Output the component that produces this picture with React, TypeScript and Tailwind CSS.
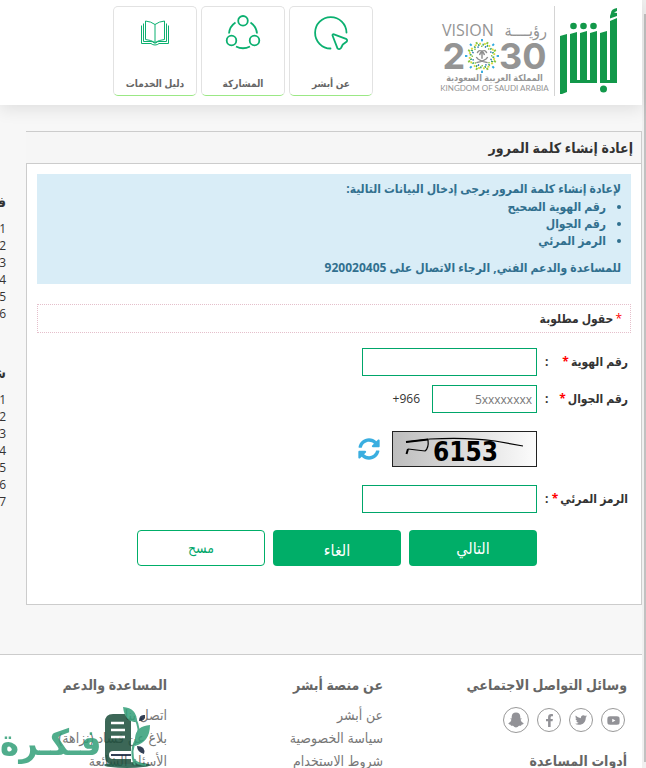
import { FaFacebookF, FaTwitter, FaSnapchatGhost, FaYoutube } from 'react-icons/fa';

const headerCards = [
    { title: 'عن أبشر', icon: <AboutIcon /> },
    { title: 'المشاركة', icon: <ShareIcon /> },
    { title: 'دليل الخدمات', icon: <GuideIcon /> },
];

const requirements = ['رقم الهوية الصحيح', 'رقم الجوال', 'الرمز المرئي'];

const social = [
    { name: 'YouTube', icon: <FaYoutube size={13} />, size: 'size-6' },
    { name: 'Twitter', icon: <FaTwitter size={12} />, size: 'size-6' },
    { name: 'Facebook', icon: <FaFacebookF size={13} />, size: 'size-6' },
    { name: 'Snapchat', icon: <SnapIcon />, size: 'size-[26px]' },
];

function SnapIcon() {
    return (
        <svg width="16" height="16" viewBox="0 0 16 16" fill="currentColor">
            <path d="M8 0.500 Q12 0.500 12.300 4.500 V6.500 L13.500 6.300 Q14 7 12.500 7.800 Q13.200 10.300 15.700 11.300 Q15.500 12.500 13.500 12.700 L13 13.700 H11 Q9.500 15.500 8 15.500 Q6.500 15.500 5 13.700 H3 L2.500 12.700 Q0.500 12.500 0.300 11.300 Q2.800 10.300 3.500 7.800 Q2 7 2.500 6.300 L3.700 6.500 V4.500 Q4 0.500 8 0.500 Z" />
        </svg>
    );
}

function AboutIcon() {
    return (
        <svg width="36" height="36" viewBox="0 0 36 36" fill="none" stroke="#0bb070" strokeWidth="1.8" strokeLinejoin="round" strokeLinecap="round">
            <path d="M17.500 33.500 A15.700 15.700 0 1 1 33.500 17.500" />
            <path d="M19.500 20.500 Q19.300 19 21 19.300 L33 23.800 Q35 25 33.500 26.800 L29.800 29.500 L28 33 Q26.300 35 24.500 33.300 Z" />
        </svg>
    );
}

function ShareIcon() {
    return (
        <svg width="36" height="36" viewBox="0 0 36 36" fill="none" stroke="#0bb070" strokeWidth="1.8">
            <circle cx="18" cy="5.8" r="4.8" />
            <circle cx="6.500" cy="25.500" r="4.8" />
            <circle cx="29.500" cy="25.500" r="4.8" />
            <path d="M4 18.500 Q4.500 11.500 10.500 7.500" />
            <path d="M32 18.500 Q31.500 11.500 25.500 7.500" />
            <path d="M11 31.500 Q18 35 25 31.500" />
        </svg>
    );
}

function GuideIcon() {
    return (
        <svg width="30" height="26" viewBox="0 0 30 26" fill="none" stroke="#0bb070" strokeWidth="1">
            <path d="M15 4.500 Q11 1.500 5.500 1 V19.500 Q11 20 15 22.500 Q19 20 24.500 19.500 V1 Q19 1.500 15 4.500 V22" />
            <path d="M3.500 3.500 V21.500 H11 Q13 21.500 14 23 H16 Q17 21.500 19 21.500 H26.500 V3.500" />
            <path d="M1.500 5.500 V23.500 H11 Q12.500 25 15 25 Q17.500 25 19 23.500 H28.500 V5.500" />
        </svg>
    );
}

function AbsherLogo() {
    return (
        <svg width="60" height="88" viewBox="0 0 60 88" fill="#12984a" role="img" aria-label="أبشر">
            <path d="M0 28 L7 26 V84 L2 86 H0 Z" />
            <path d="M10 26 L17 24 V75 H10 Z" />
            <path d="M20 25 L27 23 V75 H20 Z" />
            <path d="M30 25 L37 23 V75 H30 Z" />
            <path d="M40 25 L47 23 V75 H40 Z" />
            <path d="M10 72 H37 V75 H10 Z" />
            <path d="M40 72 H57 V75 H40 Z" />
            <path d="M50 13 L57 10 V75 H50 Z" />
            <path d="M51 5 Q51 1 57 0 V3 L54 4.500 L57 5 V8 L50 10.500 V8 Z" />
            <circle cx="13.500" cy="18" r="3.300" />
            <circle cx="23.500" cy="18" r="3.300" />
            <circle cx="33.500" cy="18" r="3.300" />
            <circle cx="43.500" cy="81" r="3.500" />
        </svg>
    );
}

function Emblem() {
    const rays = Array.from({ length: 16 }, (_, i) => i * 22.5);
    return (
        <svg width="34" height="34" viewBox="0 0 36 36" className="shrink-0" aria-hidden="true">
            {rays.map((angle, i) => (
                <g key={angle} transform={`rotate(${angle} 18 18)`}>
                    <rect x="17" y={i % 2 ? 2 : 0} width="2" height="2.500" fill={i % 2 ? '#8bc53f' : '#2fa9df'} />
                    <rect x="15" y="4" width="2" height="2" fill="#d8dc3a" />
                    <rect x="18.500" y="5" width="1.500" height="2" fill="#2a9d6b" />
                    <rect x="17" y="7" width="1.500" height="1.500" fill={i % 2 ? '#1e6bb0' : '#8bc53f'} />
                </g>
            ))}
            <g fill="none" stroke="#8d8d8d" strokeWidth="1.500">
                <path d="M18 12 V21 M18 13 Q14 11 13 15 M18 13 Q22 11 23 15 M18 14 Q16 14 15.500 17 M18 14 Q20 14 20.500 17" />
                <path d="M12 19 Q14 23 24 25 M24 19 Q22 23 12 25" />
            </g>
        </svg>
    );
}

function VisionLogo() {
    return (
        <div dir="ltr" className="flex flex-col items-center text-[#949494]">
            <div className="flex w-full items-center justify-between text-base leading-5 whitespace-nowrap">
                <span>VISION</span>
                <span>رؤيــــة</span>
            </div>
            <div className="flex h-8 items-center font-[Inter,sans-serif] text-4xl font-bold">
                <span>2</span>
                <Emblem />
                <span>30</span>
            </div>
            <div className="text-[9px] leading-3 font-bold whitespace-nowrap">المملكة العربية السعودية</div>
            <div className="font-[Lato,sans-serif] text-[8px] leading-2 whitespace-nowrap">KINGDOM OF SAUDI ARABIA</div>
        </div>
    );
}

function Header() {
    return (
        <header className="relative flex items-start bg-white pt-1.5 pr-[22px] pb-[9px] shadow-[0_4px_16px_rgba(0,0,0,0.1)]">
            <a href="#" className="pt-0.5"><AbsherLogo /></a>
            <div className="mr-[5px] ml-[7px] h-[90px] w-px bg-[#d4d4d4]" />
            <div className="w-[105px] pt-3.5"><VisionLogo /></div>
            <nav className="mr-[69px] flex gap-1">
                {headerCards.map((card) => (
                    <a key={card.title} href="#" className="flex h-[90px] w-[84px] flex-col items-center justify-between rounded-[5px] border border-[#e2e2e2] border-b-[#9be885] pt-2 pb-1 text-[10px] leading-4 font-bold text-[#666]">
                        <span className="flex h-9 items-center">{card.icon}</span>
                        <span className="whitespace-nowrap">{card.title}</span>
                    </a>
                ))}
            </nav>
        </header>
    );
}

function Label({ text, id }) {
    return (
        <label htmlFor={id} className="flex w-[91px] items-center justify-between pl-2 text-xs font-bold whitespace-nowrap text-[#333]">
            <span>{text}<span className="mr-0.5 text-[#f00]">*</span></span>
            <span>:</span>
        </label>
    );
}

function Captcha() {
    return (
        <svg width="145" height="36" viewBox="0 0 145 36" role="img" aria-label="الرمز المرئي">
            <defs>
                <linearGradient id="shade">
                    <stop offset="0" stopColor="#bdbdbd" />
                    <stop offset="1" stopColor="#fcfcfc" />
                </linearGradient>
            </defs>
            <rect x="0.500" y="0.500" width="144" height="35" fill="url(#shade)" stroke="#222" />
            <text x="41" y="30" direction="ltr" className="font-['DejaVu_Sans_Condensed','DejaVu_Sans',sans-serif] text-[26px] font-bold">6153</text>
            <path d="M14 11 L38 8 Q75 6 103 10 L131 15" fill="none" stroke="#000" strokeWidth="1.200" />
            <path d="M14 11 L36 8.500 M14.500 23 L16 18" fill="none" stroke="#000" strokeWidth="2" />
            <path d="M16 18 L33 20 Q37 17 36 9" fill="none" stroke="#000" strokeWidth="1.200" />
        </svg>
    );
}

function ResetPanel() {
    const input = 'h-7 border border-[#00a66a] bg-white px-1 text-xs outline-none placeholder:text-[#777]';
    return (
        <main className="min-w-0 flex-1">
            <h1 className="border-t border-r border-[#ccc] bg-[#f6f6f6] pr-2 text-sm leading-[31px] font-bold text-[#333]">إعادة إنشاء كلمة المرور</h1>
            <div className="border border-[#ccc] bg-white px-2.5 pt-2.5 pb-[38px]">
                <div className="bg-[#d9edf7] px-2.5 pt-1.5 pb-2 text-xs leading-[17px] font-bold text-[#31708f]">
                    <p>لإعادة إنشاء كلمة المرور يرجى إدخال البيانات التالية:</p>
                    <ul className="mt-px list-disc pr-[15px]">
                        {requirements.map((item) => <li key={item}>{item}</li>)}
                    </ul>
                    <p className="mt-2.5">للمساعدة والدعم الفني, الرجاء الاتصال على 920020405</p>
                </div>
                <p className="mt-5 border border-dotted border-[#e5bfcb] px-2 text-xs leading-[27px] font-bold text-[#333]">
                    <span className="ml-0.5 font-normal text-[#f00]">*</span>حقول مطلوبة
                </p>
                <form className="mt-[15px] pr-[3px]">
                    <div className="flex">
                        <Label text="رقم الهوية" id="national-id" />
                        <input id="national-id" className={`w-[175px] ${input}`} />
                    </div>
                    <div className="mt-[9px] flex items-center">
                        <Label text="رقم الجوال" id="mobile" />
                        <input id="mobile" placeholder="5xxxxxxxx" className={`w-[105px] ${input}`} />
                        <span dir="ltr" className="mr-3 text-xs text-[#333]">+966</span>
                    </div>
                    <div className="mt-[18px] mr-[91px] flex items-center gap-3">
                        <Captcha />
                        <button type="button" aria-label="تحديث الرمز" className="text-[#3aaee0]">
                            <svg width="22" height="22" viewBox="0 0 512 512" fill="currentColor">
                                <path d="M370.700 133.300C339.500 104 298.900 88 255.800 88c-77.500.1-144.300 53.200-162.800 126.900-1.300 5.400-6.100 9.100-11.700 9.100H24.100c-7.500 0-13.200-6.800-11.800-14.200C33.900 94.900 134.800 8 256 8c66.400 0 126.800 26.100 171.300 68.700L463 41C478.100 25.900 504 36.600 504 57.900V192c0 13.300-10.700 24-24 24H345.900c-21.400 0-32.100-25.900-17-41l41.800-41.700zM32 296h134.100c21.400 0 32.100 25.900 17 41l-41.800 41.800c31.300 29.300 71.800 45.300 114.900 45.300 77.400-.1 144.300-53.100 162.800-126.800 1.300-5.400 6.100-9.100 11.700-9.100h57.300c7.500 0 13.200 6.800 11.800 14.200C478.100 417.100 377.200 504 256 504c-66.400 0-126.800-26.100-171.300-68.700L49 471c-15.100 15.100-41 4.400-41-16.900V320c0-13.300 10.700-24 24-24z" />
                            </svg>
                        </button>
                    </div>
                    <div className="mt-[18px] flex">
                        <Label text="الرمز المرئي" id="captcha" />
                        <input id="captcha" className={`w-[175px] ${input}`} />
                    </div>
                    <div className="mt-[17px] mr-[91px] flex gap-2">
                        <button type="button" className="h-9 w-32 rounded bg-[#00ae68] text-base text-white">التالي</button>
                        <button type="button" className="h-9 w-32 rounded bg-[#00ae68] pt-1 text-base text-white">الغاء</button>
                        <button type="reset" className="h-9 w-32 rounded border border-[#00ae68] bg-white text-sm text-[#00a66a]">مسح</button>
                    </div>
                </form>
            </div>
        </main>
    );
}

function SideList({ title, count }) {
    return (
        <section className="pb-[41px]">
            <h2 className="text-sm leading-5 font-bold text-[#333]">{title}</h2>
            <ol className="mt-2 text-xs leading-[17px] text-[#333]">
                {Array.from({ length: count }, (_, i) => <li key={i}>{i + 1}</li>)}
            </ol>
        </section>
    );
}

function FooterLinks({ title, links }) {
    return (
        <div>
            <h2 className="text-sm leading-5 font-bold text-[#666]">{title}</h2>
            <ul className="mt-2 text-sm leading-[23px] text-[#777]">
                {links.map((link) => <li key={link}><a href="#">{link}</a></li>)}
            </ul>
        </div>
    );
}

function Footer() {
    return (
        <footer className="grid flex-1 grid-cols-[244px_216px_1fr] border-t border-[#ccc] bg-white pt-5 pr-[15px] whitespace-nowrap">
            <div>
                <h2 className="text-sm leading-5 font-bold text-[#666]">وسائل التواصل الاجتماعي</h2>
                <div className="mt-3 flex items-center gap-2 pr-0.5">
                    {social.map((item) => (
                        <a key={item.name} href="#" aria-label={item.name} className={`flex items-center justify-center rounded-full border border-[#999] text-[#929297] ${item.size}`}>
                            {item.icon}
                        </a>
                    ))}
                </div>
                <h2 className="mt-[18px] text-sm leading-5 font-bold text-[#666]">أدوات المساعدة</h2>
            </div>
            <FooterLinks title="عن منصة أبشر" links={['عن أبشر', 'سياسة الخصوصية', 'شروط الاستخدام']} />
            <FooterLinks title="المساعدة والدعم" links={['اتصل بنا', 'بلاغ عن فساد (نزاهة)', 'الأسئلة الشائعة']} />
        </footer>
    );
}

function Watermark() {
    return (
        <div dir="ltr" className="pointer-events-none fixed bottom-0 left-0 flex items-end gap-0.5 opacity-85">
            <span className="text-4xl leading-[52px] font-bold text-[#329f78]">فـكـرة</span>
            <svg width="48" height="62" viewBox="0 0 48 62">
                <ellipse cx="24" cy="59" rx="23" ry="3" fill="#1b5a45" />
                <path d="M2 16 Q2 8 10 8 H28 V45 H10 Q6 45 6 49 Q6 53 10 53 H28 V58 H9 Q2 58 2 50 Z" fill="#1b4d3a" />
                <path d="M8 17 H21 M8 24 H22 M8 31 H22" stroke="#fff" strokeWidth="2.500" />
                <path d="M8 49 H28" stroke="#101f38" strokeWidth="2" />
                <path d="M32 59 Q26 44 34 32 Q38 24 32 12 M31 54 Q36 59 43 59" fill="none" stroke="#329f78" strokeWidth="2" />
                <path d="M20 1 Q34 2 34 16 Q22 17 20 1 Z M47 19 Q33 20 32 32 V40 Q47 36 47 19 Z" fill="#329f78" />
                <path d="M36 15 Q36 8 42 9 Q43 15 36 15 Z M34 40 Q43 40 41 48 Q34 46 34 40 Z" fill="#101f38" />
            </svg>
        </div>
    );
}

export default function App() {
    return (
        <div className="flex h-screen overflow-hidden bg-[#f7f7f7] font-['Open_Sans','DejaVu_Sans_Condensed','DejaVu_Sans',sans-serif]">
            <div dir="rtl" className="flex min-w-0 flex-1 flex-col">
                <Header />
                <div className="flex items-start pt-[26px] pb-[49px]">
                    <ResetPanel />
                    <aside className="w-[26px] shrink-0 overflow-hidden pt-[61px] pr-5">
                        <SideList title="فـ" count={6} />
                        <SideList title="شـ" count={7} />
                    </aside>
                </div>
                <Footer />
            </div>
            <div className="w-1 shrink-0 bg-[#f0f0f0] pt-3.5 pb-1.5 pl-0.5">
                <div className="h-full bg-[#c1c1c1]" />
            </div>
            <Watermark />
        </div>
    );
}
